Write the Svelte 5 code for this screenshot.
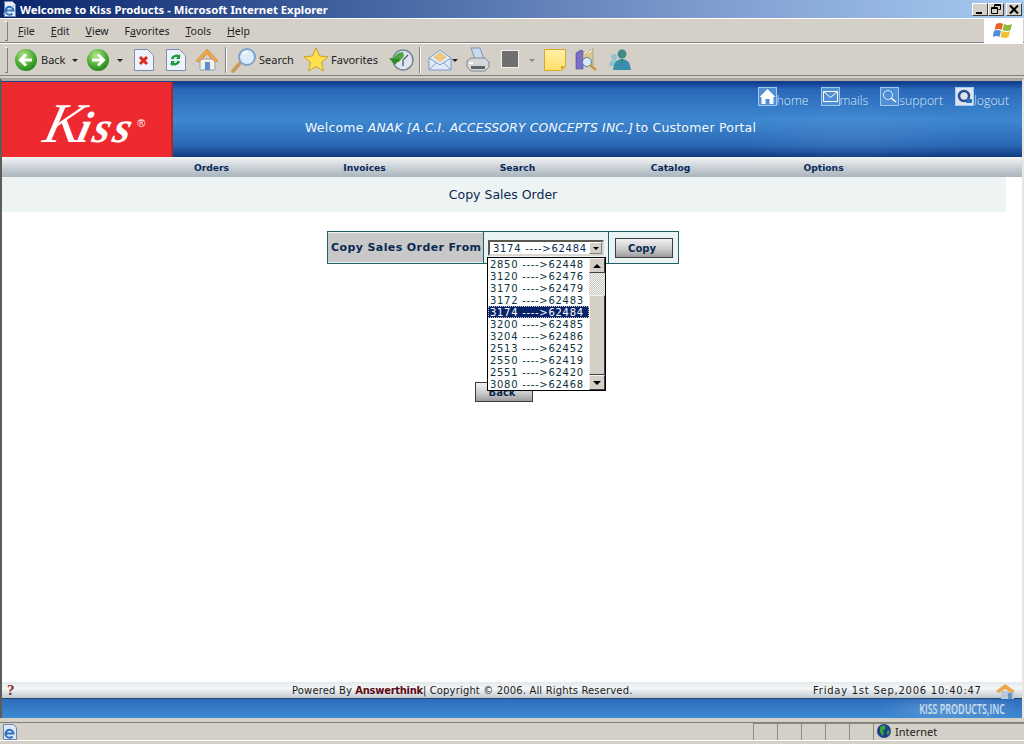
<script>
  const menus = [
    ["F", "ile"],
    ["E", "dit"],
    ["V", "iew"],
    ["F", "avorites", "a"],
    ["T", "ools"],
    ["H", "elp"]
  ];
  const navs = ["Orders", "Invoices", "Search", "Catalog", "Options"];
  const orders = [
    ["2850", "62448"],
    ["3120", "62476"],
    ["3170", "62479"],
    ["3172", "62483"],
    ["3174", "62484"],
    ["3200", "62485"],
    ["3204", "62486"],
    ["2513", "62452"],
    ["2550", "62419"],
    ["2551", "62420"],
    ["3080", "62468"]
  ];
</script>

<div class="window">
  <header class="titlebar">
    <svg class="ie" width="16" height="16" viewBox="0 0 16 16">
      <path d="M2.500.500h8l3 3v12h-11z" fill="#e8eef8" stroke="#6d86b0" />
      <path d="M3.500 9.500h8a4 4 0 1 0-1 3" fill="none" stroke="#2d6fc0" stroke-width="2" />
      <path d="M1 13q5-1 11-9" fill="none" stroke="#8ab4e4" />
    </svg>
    <span class="title">Welcome to Kiss Products - Microsoft Internet Explorer</span>
    <div class="winbtns">
      <button class="winbtn" aria-label="Minimize">
        <svg width="14" height="11" viewBox="0 0 14 11"><path d="M3 8h6v2H3z" fill="#000" /></svg>
      </button>
      <button class="winbtn" aria-label="Restore">
        <svg width="14" height="11" viewBox="0 0 14 11"><path d="M5.500 3V.500h6v5h-2M2.500 3.500h6v6h-6z M2.500 4.500h6 M5.500 1.500h6" fill="none" stroke="#000" /></svg>
      </button>
      <button class="winbtn close" aria-label="Close">
        <svg width="14" height="11" viewBox="0 0 14 11"><path d="M3 1.500l8 8M11 1.500l-8 8" stroke="#000" stroke-width="2" /></svg>
      </button>
    </div>
  </header>

  <nav class="menubar">
    <span class="grip"></span>
    <ul class="menus">
      {#each menus as m}
        <li>
          {#if m[2]}{m[0]}<u>{m[2]}</u>{m[1].slice(1)}{:else}<u>{m[0]}</u>{m[1]}{/if}
        </li>
      {/each}
    </ul>
    <div class="flag">
      <svg width="22" height="20" viewBox="0 0 22 20">
        <path d="M3 3q4-2 7 0l-1.500 6q-3-2-7 0z" fill="#e8622c" />
        <path d="M11 3q4 2 8 0l-1.500 6q-4 2-8 0z" fill="#8fbc3a" />
        <path d="M1 10q4-2 7 0l-1.500 6q-3-2-7 0z" fill="#4a8fd8" />
        <path d="M9 10q4 2 8 0l-1.500 6q-4 2-8 0z" fill="#f2c230" />
      </svg>
    </div>
  </nav>

  <div class="toolbar">
    <span class="grip tall"></span>
    <svg class="t back" width="24" height="24" viewBox="0 0 24 24">
      <defs>
        <radialGradient id="grn" cx="0.4" cy="0.3" r="0.8">
          <stop offset="0" stop-color="#b5e88a" /><stop offset="0.6" stop-color="#45a82f" /><stop offset="1" stop-color="#1d7a1d" />
        </radialGradient>
        <linearGradient id="note" x1="0" y1="0" x2="0" y2="1">
          <stop offset="0" stop-color="#fff0a8" /><stop offset="1" stop-color="#ffdf6a" />
        </linearGradient>
      </defs>
      <circle cx="12" cy="12" r="11" fill="url(#grn)" />
      <path d="M18 12H8M12 6.500L6.500 12l5.500 5.500" fill="none" stroke="#fff" stroke-width="3" />
    </svg>
    <span class="lbl backlbl">Back</span>
    <span class="caret c1"></span>
    <svg class="t fwd" width="24" height="24" viewBox="0 0 24 24">
      <circle cx="12" cy="12" r="11" fill="url(#grn)" />
      <path d="M6 12h10M12 6.500l5.500 5.500-5.500 5.500" fill="none" stroke="#fff" stroke-width="3" />
    </svg>
    <span class="caret c2"></span>
    <svg class="t stop" width="20" height="22" viewBox="0 0 20 22">
      <path d="M.5.500h13l6 6v15H.5z" fill="#eef2fb" stroke="#7d8db8" />
      <path d="M6 8l7 7M13 8l-7 7" stroke="#dd2a1c" stroke-width="3" />
    </svg>
    <svg class="t refresh" width="20" height="22" viewBox="0 0 20 22">
      <path d="M.5.500h13l6 6v15H.5z" fill="#eef2fb" stroke="#7d8db8" />
      <path d="M14 8a5 5 0 0 0-8 2M5 14a5 5 0 0 0 8-2" fill="none" stroke="#1f9a3a" stroke-width="2.500" />
      <path d="M14 5v5h-4zM5 17v-5h4z" fill="#1f9a3a" />
    </svg>
    <svg class="t home" width="24" height="24" viewBox="0 0 24 24">
      <path d="M5 11v11h15V11z" fill="#f4f0e4" stroke="#8aa0c0" />
      <path d="M1 13L12 1l11 12-3 1-8-8-8 8z" fill="#eda64a" stroke="#c47e2a" stroke-width=".6" />
      <path d="M10 14h5v8h-5z" fill="#5c90d0" />
    </svg>
    <span class="sep"></span>
    <svg class="t search" width="26" height="26" viewBox="0 0 26 26">
      <path d="M2 24l8-9" stroke="#c89a5c" stroke-width="3.500" stroke-linecap="round" />
      <circle cx="16" cy="10" r="8" fill="#dcecfa" stroke="#7ea4cc" stroke-width="2" />
      <path d="M12 7a5 5 0 0 1 5-2" stroke="#fff" stroke-width="2" fill="none" />
    </svg>
    <span class="lbl searchlbl">Search</span>
    <svg class="t star" width="26" height="26" viewBox="0 0 26 26">
      <path d="M13 1l3.500 8 8.500.8-6.500 5.600 2 8.600L13 19.500 5.500 24l2-8.600L1 9.800 9.500 9z" fill="#ffe14d" stroke="#c9a227" />
    </svg>
    <span class="lbl favlbl">Favorites</span>
    <svg class="t history" width="25" height="24" viewBox="0 0 25 24">
      <circle cx="14" cy="12" r="10" fill="#dfe6ee" stroke="#71869a" stroke-width="1.500" />
      <path d="M14 12l5-5M14 12v6" stroke="#4a5d78" stroke-width="1.300" />
      <path d="M4 14a10 10 0 0 1 10-10l1 4-5 6z" fill="#4ca638" />
      <path d="M0 10l6 7 5-6z" fill="#2f8a2a" />
    </svg>
    <span class="sep second"></span>
    <svg class="t mail" width="24" height="24" viewBox="0 0 24 24">
      <path d="M1 10L12 2l11 8v12H1z" fill="#dfeaf8" stroke="#7f9bc8" />
      <path d="M5 9l7-5 7 5-7 5z" fill="#f0c680" />
      <path d="M1 22l8-8M23 22l-8-8M1 10l11 7 11-7" fill="none" stroke="#7f9bc8" />
    </svg>
    <span class="caret c3"></span>
    <svg class="t print" width="24" height="26" viewBox="0 0 24 26">
      <path d="M5 1h9l4 11H9z" fill="#c8daf0" stroke="#7f92b0" />
      <path d="M1 14l4-3h14l4 4v5l-4 4H5l-4-4z" fill="#d4d6da" stroke="#83868e" />
      <path d="M5 19h14v3H5z" fill="#62646c" />
      <path d="M3 15h4v2H3z" fill="#fff" />
    </svg>
    <span class="edit"></span>
    <span class="caret c4"></span>
    <svg class="t notes" width="22" height="22" viewBox="0 0 22 22">
      <path d="M.5.500h21v17l-4 4H.5z" fill="url(#note)" stroke="#d9a62e" />
      <path d="M21 17h-4v4z" fill="#d9a62e" />
    </svg>
    <svg class="t research" width="22" height="24" viewBox="0 0 22 24">
      <path d="M1 5l5-3 2 1v18H1z" fill="#7a70c8" stroke="#4f478f" stroke-width=".6" />
      <path d="M8 5l10-4v16H8z" fill="#d8c78f" stroke="#a08f50" stroke-width=".6" />
      <path d="M9 6l4-4M13 5l4-3" stroke="#fff" />
      <circle cx="12" cy="14" r="4.500" fill="#d9eaf8" stroke="#5d7ea8" />
      <path d="M15 17l6 5" stroke="#c89a3c" stroke-width="2.500" />
    </svg>
    <svg class="t msn" width="24" height="22" viewBox="0 0 24 22">
      <circle cx="6" cy="8" r="3" fill="#8fc2d2" />
      <path d="M1 17q0-6 5-6t5 6z" fill="#8fc2d2" />
      <circle cx="14" cy="5" r="4.500" fill="#3f8c84" />
      <path d="M5 21q1-11 9-11t9 11z" fill="#3a8fae" />
      <path d="M13 10h2l-1 6z" fill="#2f7d4a" />
    </svg>
  </div>

  <div class="page">
    <section class="banner">
      <div class="logo"><span class="kiss"><span class="bigk">K</span>iss</span><span class="reg">®</span></div>
      <div class="banner-main">
        <div class="links">
          <a class="link"><svg width="19" height="19" viewBox="0 0 19 19"><rect x=".5" y=".5" width="18" height="18" fill="#4f8fd4" stroke="#a4c8ee" /><path d="M1.500 10l8-8 8 8h-2v7h-4v-5h-4v5h-4v-7z" fill="#fff" /></svg>home</a>
          <a class="link"><svg width="19" height="19" viewBox="0 0 19 19"><rect x=".5" y=".5" width="18" height="18" fill="#4f8fd4" stroke="#a4c8ee" /><path d="M2.500 4.500h14v10h-14zM2.500 4.500l7 6 7-6" fill="none" stroke="#fff" /></svg>mails</a>
          <a class="link"><svg width="19" height="19" viewBox="0 0 19 19"><rect x=".5" y=".5" width="18" height="18" fill="#4f8fd4" stroke="#a4c8ee" /><circle cx="8" cy="8" r="4.500" fill="none" stroke="#dfeaf8" /><path d="M11 11l5 4" stroke="#fff" stroke-width="1.500" /></svg>support</a>
          <a class="link"><svg width="19" height="19" viewBox="0 0 19 19"><rect x=".5" y=".5" width="18" height="18" fill="#dbe4f0" stroke="#a4c8ee" /><circle cx="9" cy="9" r="5" fill="none" stroke="#2a4f8c" stroke-width="2.500" /><path d="M11 12h6v4h-6z" fill="#2a6fc0" /></svg>logout</a>
        </div>
        <p class="welcome">Welcome <em>ANAK [A.C.I. ACCESSORY CONCEPTS INC.]</em> to Customer Portal</p>
      </div>
    </section>

    <nav class="mainnav">
      {#each navs as n}
        <span>{n}</span>
      {/each}
    </nav>

    <h1 class="band">Copy Sales Order</h1>

    <div class="formwrap">
      <div class="form">
        <div class="fromlabel">Copy Sales Order From</div>
        <div class="selcell">
          <div class="select">
            <span class="val">3174 ----&gt;62484</span>
            <span class="arrow"><i class="dn small"></i></span>
          </div>
          <div class="dropdown">
            <ul>
              {#each orders as o}
                <li class:sel={o[0] === "3174"}>{o[0]} ----&gt;{o[1]}</li>
              {/each}
            </ul>
            <div class="scroll">
              <span class="sbtn"><i class="up"></i></span>
              <span class="track"></span>
              <span class="thumb"></span>
              <span class="sbtn"><i class="dn"></i></span>
            </div>
          </div>
        </div>
        <div class="btncell"><button class="btn copy">Copy</button></div>
      </div>
    </div>

    <div class="backrow"><button class="btn backbtn">Back</button></div>

    <footer class="pagefoot">
      <div class="footrow">
        <span class="help">?</span>
        <span class="powered">Powered By <b>Answerthink</b>| Copyright © 2006. All Rights Reserved.</span>
        <span class="date">Friday 1st Sep,2006 10:40:47</span>
        <svg class="fhome" width="20" height="16" viewBox="0 0 20 16">
          <path d="M5 8v8h13V8z" fill="#b9c8dc" />
          <path d="M0 8l9-7 10 7-3 2-7-4-6 4z" fill="#eda64a" />
          <path d="M12 10h4v6h-4z" fill="#6f90c0" />
        </svg>
      </div>
      <div class="footblue"><span>KISS PRODUCTS,INC</span></div>
    </footer>
  </div>

  <div class="status">
    <svg class="sie" width="16" height="16" viewBox="0 0 16 16">
      <path d="M1.500.500h10l3 3v12h-13z" fill="#dde7f4" stroke="#6d86b0" />
      <path d="M3.500 9.500h8a4 4 0 1 0-1 3" fill="none" stroke="#2d6fc0" stroke-width="2" />
    </svg>
    <div class="cells">
      <span></span><span></span><span></span><span></span><span></span>
      <div class="zone">
        <svg width="16" height="16" viewBox="0 0 16 16">
          <circle cx="8" cy="8" r="7" fill="#1e3f8c" />
          <path d="M4 4l4-2 2 3-3 3 1 3-2 2-2-4zM11 8l3-1-1 4-2 1z" fill="#3ca03c" />
        </svg>
        <span class="inet">Internet</span>
      </div>
    </div>
  </div>
</div>

<style>
  :global(body) {
    margin: 0;
    background: #fff;
  }

  .window {
    width: 1024px;
    height: 744px;
    display: flex;
    flex-direction: column;
    overflow: hidden;
    background: #d4d0c8;
    font-family: "Noto Sans", "Liberation Sans", sans-serif;
    font-size: 11px;
    color: #000;
  }

  .titlebar {
    height: 18px;
    flex: none;
    display: flex;
    align-items: center;
    background: linear-gradient(90deg, #0a246a 0%, #3a5a9a 30%, #7f9fcf 70%, #a6caf0 100%);
  }
  .ie {
    margin: 0 2px 0 2px;
  }
  .title {
    color: #fff;
    font-weight: 700;
    font-size: 11.300px;
  }
  .winbtns {
    margin-left: auto;
    display: flex;
    padding-right: 2px;
  }
  .winbtn {
    width: 16px;
    height: 13px;
    padding: 0;
    margin: 0;
    border: 1px solid;
    border-color: #fff #404040 #404040 #fff;
    background: #d4d0c8;
    display: flex;
    align-items: center;
    justify-content: center;
  }
  .winbtn.close {
    margin-left: 2px;
  }

  .menubar {
    height: 25px;
    flex: none;
    display: flex;
    align-items: center;
    box-sizing: border-box;
    border-top: 1px solid #fff;
    border-bottom: 1px solid #808080;
    padding-left: 5px;
  }
  .grip {
    width: 2px;
    height: 18px;
    border: 1px solid;
    border-color: #fff #808080 #808080 #fff;
    border-left-width: 0;
    flex: none;
  }
  .grip.tall {
    height: 24px;
    position: absolute;
    left: 5px;
    top: 3px;
  }
  .menus {
    list-style: none;
    display: flex;
    margin: 0;
    padding: 0 0 0 10px;
    font-size: 10.500px;
    color: #222;
    gap: 16px;
  }
  .flag {
    margin-left: auto;
    margin-right: 1px;
    width: 39px;
    height: 24px;
    background: #fff;
    display: flex;
    align-items: center;
    justify-content: center;
  }

  .toolbar {
    height: 33px;
    flex: none;
    position: relative;
    box-sizing: border-box;
    border-top: 1px solid #fff;
    border-bottom: 1px solid #808080;
  }
  .t,
  .lbl,
  .caret,
  .sep,
  .edit {
    position: absolute;
  }
  .lbl {
    top: 8px;
    font-size: 11px;
    color: #222;
    line-height: 16px;
  }
  .caret {
    width: 0;
    height: 0;
    border: 3px solid transparent;
    border-top: 3px solid #222;
    border-bottom: 0;
    top: 15px;
  }
  .sep {
    width: 1px;
    height: 26px;
    top: 3px;
    left: 225px;
    background: #808080;
    border-right: 1px solid #fff;
  }
  .sep.second {
    left: 419px;
  }
  .back { left: 14px; top: 4px; }
  .backlbl { left: 41px; }
  .c1 { left: 72px; }
  .fwd { left: 86px; top: 4px; }
  .c2 { left: 117px; }
  .stop { left: 134px; top: 5px; }
  .refresh { left: 166px; top: 5px; }
  .home { left: 195px; top: 4px; }
  .search { left: 231px; top: 3px; }
  .searchlbl { left: 259px; }
  .star { left: 303px; top: 3px; }
  .favlbl { left: 331px; }
  .history { left: 389px; top: 4px; }
  .mail { left: 428px; top: 4px; }
  .c3 { left: 452px; }
  .print { left: 466px; top: 3px; }
  .edit {
    left: 501px;
    top: 6px;
    width: 16px;
    height: 16px;
    background: #6f6f6f;
    border: 1px solid #f0f0f0;
  }
  .c4 { left: 529px; border-top-color: #8a8a8a; }
  .notes { left: 544px; top: 5px; }
  .research { left: 575px; top: 4px; }
  .msn { left: 608px; top: 5px; }

  .page {
    flex: 1;
    min-height: 0;
    display: flex;
    flex-direction: column;
    background: #fff;
    border-top: 3px solid #aaa69c;
    border-left: 2px solid #5f5c55;
    border-right: 2px solid #e8e6e0;
    margin-top: 2px;
    color: #0b2a52;
    font-family: "DejaVu Sans", sans-serif;
  }

  .banner {
    height: 76px;
    box-sizing: border-box;
    flex: none;
    display: flex;
    border-top: 1px solid #1c3f8e;
  }
  .logo {
    width: 171px;
    flex: none;
    box-sizing: border-box;
    background: #ee2a30;
    border-right: 2px solid #b0262c;
    display: flex;
    justify-content: center;
    align-items: center;
    color: #fff;
    padding: 6px 0 0 18px;
  }
  .kiss {
    font-family: "Liberation Serif", serif;
    font-style: italic;
    font-weight: 700;
    font-size: 44px;
    line-height: 1;
    letter-spacing: 3px;
    transform: skewX(-14deg);
    white-space: nowrap;
  }
  .bigk {
    font-size: 56px;
    font-weight: 400;
    letter-spacing: -3px;
  }
  .reg {
    font-family: "Liberation Sans", sans-serif;
    font-size: 11px;
    margin: 0 0 0 2px;
  }
  .banner-main {
    flex: 1;
    background:
      radial-gradient(ellipse 120px 30px at 80% 70%, rgba(120, 170, 225, 0.18), transparent),
      linear-gradient(180deg, #0e3a8c 0%, #2a68b8 10%, #3d88d0 50%, #2a66b4 85%, #0e3a80 100%);
    color: #fff;
    display: flex;
    flex-direction: column;
  }
  .links {
    display: flex;
    justify-content: flex-end;
    align-items: flex-end;
    gap: 12px;
    padding: 1px 13px 0 0;
    height: 23px;
  }
  .link {
    display: flex;
    align-items: flex-end;
    color: #d8e8f8;
    font-family: "Open Sans", sans-serif;
    font-size: 12.300px;
    line-height: 11px;
    font-weight: 300;
  }
  .welcome {
    margin: 0;
    padding: 14px 0 0 132px;
    font-size: 12.500px;
    line-height: 16px;
    color: #f4f8fc;
    letter-spacing: 0.2px;
    white-space: nowrap;
  }
  .welcome em {
    font-size: 12.300px;
    font-style: italic;
    margin-right: -2px;
  }

  .mainnav {
    height: 20px;
    flex: none;
    display: flex;
    background: linear-gradient(180deg, #f2f4f6 0%, #c4ccd2 60%, #aab4bc 100%);
    font-size: 9.200px;
    font-weight: 700;
    align-items: center;
    padding-left: 133px;
    box-sizing: border-box;
    color: #0a2a5c;
  }
  .mainnav span {
    width: 153px;
    flex: none;
    text-align: center;
  }

  .band {
    margin: 0;
    height: 35px;
    flex: none;
    box-sizing: border-box;
    width: 1004px;
    background: #eef3f3;
    font-size: 12.500px;
    font-weight: 400;
    line-height: 36px;
    text-align: center;
    padding-right: 2px;
    color: #0b2a52;
  }

  .formwrap {
    padding: 19px 0 0 325px;
    flex: none;
  }
  .form {
    width: 352px;
    height: 33px;
    box-sizing: border-box;
    border: 1px solid #1f5f66;
    display: flex;
    background: #eaf3f3;
  }
  .fromlabel {
    width: 155px;
    height: 29px;
    margin: 1px 0;
    flex: none;
    background: #c8c8c8;
    font-size: 11px;
    font-weight: 700;
    letter-spacing: 0.4px;
    line-height: 30px;
    padding-left: 3px;
    box-sizing: border-box;
    color: #0b2a52;
    white-space: nowrap;
  }
  .selcell {
    position: relative;
    width: 126px;
    flex: none;
    border-left: 1px solid #1f5f66;
    border-right: 1px solid #1f5f66;
    box-sizing: border-box;
  }
  .select {
    position: absolute;
    left: 4px;
    top: 8px;
    width: 116px;
    height: 16px;
    box-sizing: border-box;
    border: 2px solid;
    border-color: #5a5850 #d8d6ce #d8d6ce #5a5850;
    background: #fff;
    display: flex;
    font-size: 10px;
    letter-spacing: 0.7px;
    line-height: 14px;
    padding-left: 3px;
    white-space: nowrap;
  }
  .val {
    flex: 1;
    overflow: hidden;
  }
  .arrow {
    width: 13px;
    height: 12px;
    flex: none;
    background: #d4d0c8;
    border: 1px solid;
    border-color: #fff #808080 #808080 #fff;
    box-sizing: border-box;
    display: flex;
    align-items: center;
    justify-content: center;
  }
  .dn,
  .up {
    display: block;
    width: 0;
    height: 0;
    border: 4px solid transparent;
    border-bottom: 0;
    border-top: 4px solid #000;
  }
  .up {
    border-top: 0;
    border-bottom: 4px solid #000;
  }
  .dn.small {
    border-width: 3px 3px 0;
  }
  .dropdown {
    position: absolute;
    left: 3px;
    top: 25px;
    width: 119px;
    height: 134px;
    box-sizing: border-box;
    border: 1px solid #000;
    background: #fff;
    display: flex;
    z-index: 5;
    overflow: hidden;
  }
  .dropdown ul {
    list-style: none;
    margin: 0;
    padding: 0;
    width: 101px;
    flex: none;
    font-size: 10px;
    letter-spacing: 0.7px;
    white-space: nowrap;
    color: #0e3440;
  }
  .dropdown li {
    height: 12px;
    line-height: 14px;
    padding-left: 2px;
  }
  .dropdown li.sel {
    background: #0a246a;
    color: #fff;
    outline: 1px dotted #c8c8c8;
    outline-offset: -1px;
  }
  .scroll {
    flex: 1;
    display: flex;
    flex-direction: column;
  }
  .sbtn {
    height: 15px;
    flex: none;
    background: #d4d0c8;
    border: 1px solid;
    border-color: #f4f2ee #404040 #404040 #f4f2ee;
    box-sizing: border-box;
    display: flex;
    align-items: center;
    justify-content: center;
  }
  .track {
    height: 22px;
    flex: none;
    background: repeating-conic-gradient(#c8c6c0 0% 25%, #f4f4f4 0% 50%) 0 0 / 2px 2px;
  }
  .thumb {
    flex: 1;
    background: #d4d0c8;
    border: 1px solid;
    border-color: #f4f2ee #404040 #404040 #f4f2ee;
  }

  .btncell {
    flex: 1;
    display: flex;
    align-items: center;
    padding-left: 6px;
  }
  .btn {
    width: 58px;
    height: 20px;
    padding: 1px 4px 0 0;
    border: 1px solid #3c3c3c;
    background: linear-gradient(180deg, #f2f2f2 0%, #c8c8c8 60%, #9c9c9c 100%);
    font-family: "DejaVu Sans", sans-serif;
    font-size: 10px;
    font-weight: 700;
    color: #0b2a52;
  }
  .backrow {
    padding: 118px 0 0 473px;
    flex: none;
  }

  .pagefoot {
    margin-top: auto;
    flex: none;
  }
  .footrow {
    height: 17px;
    box-sizing: border-box;
    padding-top: 1px;
    position: relative;
    display: flex;
    align-items: center;
    background: linear-gradient(180deg, #e4e9ec 0%, #f4f6f7 40%, #c0c9d0 100%);
    border-bottom: 1px solid #27496f;
    font-size: 10px;
    letter-spacing: 0.15px;
    color: #1a1a1a;
    white-space: nowrap;
  }
  .help {
    margin-left: 5px;
    width: 285px;
    color: #8c1c24;
    font-family: "Liberation Serif", serif;
    font-size: 15px;
    font-weight: 700;
    letter-spacing: 0;
  }
  .powered {
    width: 521px;
    flex: none;
  }
  .powered b {
    color: #5c0a14;
    letter-spacing: -0.3px;
  }
  .date {
    flex: none;
    letter-spacing: 0.75px;
  }
  .fhome {
    position: absolute;
    right: 6px;
    top: 1px;
  }
  .footblue {
    height: 19px;
    background:
      radial-gradient(ellipse 70px 14px at 93% 50%, rgba(170, 200, 230, 0.35), transparent),
      linear-gradient(180deg, #2f6cbc 0%, #3d8ad2 100%);
    text-align: right;
    padding-right: 17px;
    color: #cfe0ee;
    font-family: "Open Sans", sans-serif;
    font-size: 14px;
    font-weight: 600;
    line-height: 19px;
  }
  .footblue span {
    display: inline-block;
    transform: scaleX(0.64);
    transform-origin: right;
    white-space: nowrap;
  }

  .status {
    height: 18px;
    flex: none;
    box-sizing: border-box;
    margin: 4px 0 4px;
    border-top: 1px solid #808078;
    display: flex;
    align-items: center;
    padding-left: 2px;
    box-shadow: 0 1px 0 #fff;
  }
  .cells {
    margin-left: auto;
    display: flex;
    align-items: center;
    height: 100%;
  }
  .cells > span {
    width: 24px;
    height: 17px;
    box-sizing: border-box;
    border-left: 1px solid #8c8a82;
    border-top: 1px solid #8c8a82;
  }
  .zone {
    width: 151px;
    height: 17px;
    box-sizing: border-box;
    border-left: 1px solid #8c8a82;
    border-top: 1px solid #8c8a82;
    padding: 0 0 2px 2px;
    display: flex;
    align-items: center;
    gap: 3px;
  }
  .inet {
    font-size: 11px;
    color: #222;
  }
</style>
